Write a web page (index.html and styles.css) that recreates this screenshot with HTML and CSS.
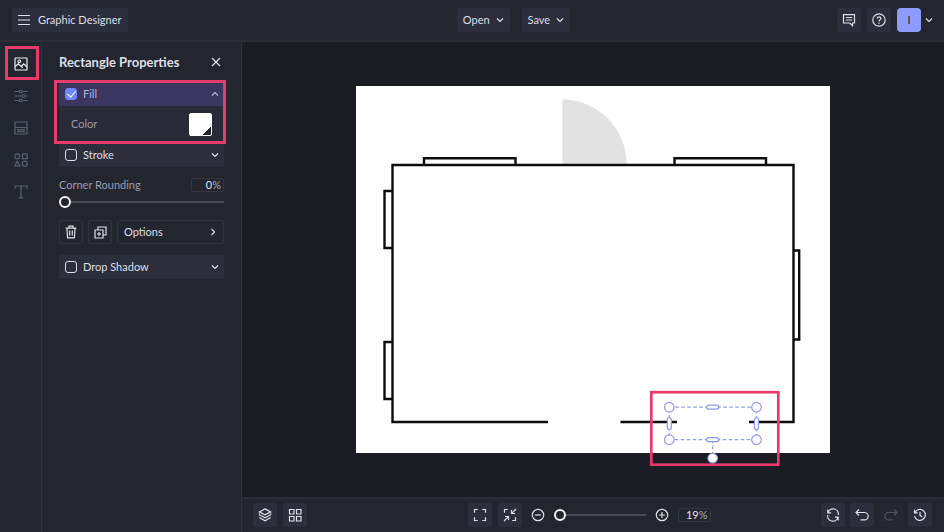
FILE: index.html
```html
<!DOCTYPE html>
<html lang="en">
<head>
<meta charset="utf-8">
<title>Graphic Designer</title>
<link rel="stylesheet" href="styles.css">
</head>
<body>
<div class="app">
  <header class="topbar">
    <button class="btn menu-btn" type="button">
      <svg class="icon" width="12" height="12" viewBox="0 0 12 12"><path d="M0 1.500h12M0 6h12M0 10.500h12"/></svg>
      Graphic Designer
    </button>
    <div class="file-actions">
      <button class="btn" type="button">Open <svg class="icon" width="8" height="8" viewBox="0 0 8 8"><path d="M1 2.500l3 3 3-3"/></svg></button>
      <button class="btn" type="button">Save <svg class="icon" width="8" height="8" viewBox="0 0 8 8"><path d="M1 2.500l3 3 3-3"/></svg></button>
    </div>
    <div class="account">
      <button class="btn square" type="button" aria-label="Feedback"><svg class="icon" width="14" height="14" viewBox="0 0 14 14"><path d="M1.500 1.700h11v8.300h-2v2.600L7.800 10H1.500zM3.800 4.500h6.400M3.800 7h6.400"/></svg></button>
      <button class="btn square" type="button" aria-label="Help"><svg class="icon" width="14" height="14" viewBox="0 0 14 14"><circle cx="7" cy="7" r="6.200"/><path d="M5.200 5.600C5.200 3.200 8.900 3.300 8.900 5.500 8.900 6.800 7 6.800 7 8.400M7 9.700v1.200"/></svg></button>
      <button class="btn square avatar" type="button">I</button>
      <button class="bare" type="button" aria-label="Account menu"><svg class="icon" width="8" height="8" viewBox="0 0 8 8"><path d="M1 2.500l3 3 3-3"/></svg></button>
    </div>
  </header>

  <nav class="rail" aria-label="Tools">
    <button class="tool active" type="button" aria-label="Image"><svg class="icon" width="14" height="14" viewBox="0 0 14 14"><rect x="1" y="1" width="12" height="12" rx=".6"/><circle cx="5.300" cy="4.300" r="1.300"/><path d="M1 9.700l3.200-3 3 2.700 2.500-2.600L13 10M7.200 9.400l1.600 1.400"/></svg></button>
    <button class="tool" type="button" aria-label="Adjust"><svg class="icon" width="14" height="14" viewBox="0 0 14 14"><path d="M.5 2.500h4.700M8.200 2.500h5.300M.5 7h7.700M11.200 7h2.300M.5 11.500h4.700M8.200 11.500h5.300"/><circle cx="6.700" cy="2.500" r="1.500"/><circle cx="9.700" cy="7" r="1.500"/><circle cx="6.700" cy="11.500" r="1.500"/></svg></button>
    <button class="tool" type="button" aria-label="Templates"><svg class="icon" width="14" height="14" viewBox="0 0 14 14"><path d="M1 1h12v12H1zM1 6.500h12M3 8.700h8M3 10.700h8"/></svg></button>
    <button class="tool" type="button" aria-label="Shapes"><svg class="icon" width="14" height="14" viewBox="0 0 14 14"><circle cx="3.300" cy="3.300" r="2.500"/><rect x="8.500" y="1" width="4.700" height="4.700"/><path d="M3.300 8.300L5.900 13H.7z"/><circle cx="10.800" cy="10.700" r="2.500"/></svg></button>
    <button class="tool" type="button" aria-label="Text"><svg class="icon" width="14" height="14" viewBox="0 0 14 14"><path d="M1 3.500V1h12v2.500M7 1v12M4.500 13h5"/></svg></button>
  </nav>

  <aside class="panel">
    <div class="panel-head">
      <h2>Rectangle Properties</h2>
      <button class="bare" type="button" aria-label="Close"><svg class="icon" width="10" height="10" viewBox="0 0 10 10"><path d="M1 1l8 8M9 1L1 9"/></svg></button>
    </div>
    <section class="fill-group">
      <div class="section-head open">
        <label><input type="checkbox" checked>Fill</label>
        <button class="bare" type="button" aria-label="Collapse fill"><svg class="icon" width="8" height="8" viewBox="0 0 8 8"><path d="M1 5.500l3-3 3 3"/></svg></button>
      </div>
      <div class="color-row">
        <span id="color-label">Color</span>
        <button class="swatch" type="button" aria-labelledby="color-label"></button>
      </div>
    </section>
    <div class="section-head">
      <label><input type="checkbox">Stroke</label>
      <button class="bare" type="button" aria-label="Expand stroke"><svg class="icon" width="8" height="8" viewBox="0 0 8 8"><path d="M1 2.500l3 3 3-3"/></svg></button>
    </div>
    <div class="rounding">
      <label for="rounding">Corner Rounding</label>
      <span class="percent"><input id="rounding" type="text" value="0">%</span>
    </div>
    <input class="slider" type="range" min="0" max="100" value="0" aria-label="Corner rounding slider">
    <div class="object-actions">
      <button class="outline" type="button" aria-label="Delete"><svg class="icon" width="12" height="14" viewBox="0 0 12 14"><path d="M.7 3.200h10.600M4 3V1.200h4V3M2 3.500l.6 9.300h6.800l.6-9.300M4.700 5.500v5M7.300 5.500v5"/></svg></button>
      <button class="outline" type="button" aria-label="Duplicate"><svg class="icon" width="13" height="13" viewBox="0 0 13 13"><path d="M4 3.500V1h8v8H9.500M1 4h8v8H1zM5 6v4M3 8h4"/></svg></button>
      <button class="outline options" type="button">Options <svg class="icon" width="8" height="8" viewBox="0 0 8 8"><path d="M2.500 1l3 3-3 3"/></svg></button>
    </div>
    <div class="section-head">
      <label><input type="checkbox">Drop Shadow</label>
      <button class="bare" type="button" aria-label="Expand drop shadow"><svg class="icon" width="8" height="8" viewBox="0 0 8 8"><path d="M1 2.500l3 3 3-3"/></svg></button>
    </div>
  </aside>

  <main class="workspace">
    <svg class="drawing" viewBox="242 42 702 455" role="img" aria-label="Floor plan">
      <rect x="356" y="86" width="474" height="367" fill="#fff"/>
      <path d="M562.500 164V99.500A64 64.500 0 0 1 626.500 164z" fill="#e2e2e2"/>
      <g fill="none" stroke="#0c0c0e" stroke-width="2.400">
        <path d="M548 422H392.500V165h401v257H749M620.500 422H677"/>
        <path d="M424 165v-6.700h91.500v6.700M674.500 165v-6.700H766v6.700"/>
        <path d="M392.500 191h-8v57h8M392.500 342h-8v57h8M793.500 250.500h5.700v89h-5.700"/>
      </g>
      <rect x="651.300" y="392.200" width="127" height="72.500" fill="none" stroke="#e83a6b" stroke-width="2.700"/>
      <g fill="#fff" stroke="#8c9af0" stroke-width="1.200">
        <path d="M669.300 407.200h87.200v32.500h-87.200zM712.700 439.700V458" fill="none" stroke-dasharray="3.500 2.500"/>
        <circle cx="669.300" cy="407.200" r="4.800"/><circle cx="756.500" cy="407.200" r="4.800"/>
        <circle cx="669.300" cy="439.700" r="4.800"/><circle cx="756.500" cy="439.700" r="4.800"/>
        <rect x="706.700" y="405.200" width="12" height="4" rx="2"/>
        <rect x="706.700" y="437.700" width="12" height="4" rx="2"/>
        <rect x="667.300" y="417.500" width="4" height="12" rx="2"/>
        <rect x="754.500" y="417.500" width="4" height="12" rx="2"/>
        <circle cx="712.700" cy="458.200" r="4.800"/>
      </g>
    </svg>
  </main>

  <footer class="bottombar">
    <div class="group">
      <button class="btn square" type="button" aria-label="Layers"><svg class="icon" width="14" height="14" viewBox="0 0 14 14"><path d="M7 .9l5.700 3L7 6.900l-5.700-3zM1.300 6.700L7 9.700l5.700-3M1.300 9.600l5.700 3.200 5.700-3.200M1.300 5.500v1.200M12.700 5.500v1.200"/></svg></button>
      <button class="btn square" type="button" aria-label="Grid"><svg class="icon" width="14" height="14" viewBox="0 0 14 14"><path d="M1.500 1.500H6V6H1.500zM8.500 1.500H13V6H8.500zM1.500 8.500H6V13H1.500zM8.500 8.500H13V13H8.500z"/></svg></button>
    </div>
    <div class="group zoom">
      <button class="btn square" type="button" aria-label="Fit to screen"><svg class="icon" width="14" height="14" viewBox="0 0 14 14"><path d="M1.500 4.800V1.500h3.300M9.200 1.500h3.300v3.300M12.500 9.200v3.300H9.200M4.800 12.500H1.500V9.200"/></svg></button>
      <button class="btn square" type="button" aria-label="Actual size"><svg class="icon" width="14" height="14" viewBox="0 0 14 14"><path d="M1.500 4.800V1.500h3.300M12.500 9.200v3.300H9.200M13 1L8.700 5.300M8.500 2v3.500H12M1 13l4.300-4.300M2 8.500h3.500V12"/></svg></button>
      <button class="bare zoom-btn" type="button" aria-label="Zoom out"><svg class="icon" width="14" height="14" viewBox="0 0 14 14"><circle cx="7" cy="7" r="5.700"/><path d="M4 7h6"/></svg></button>
      <input class="slider" type="range" min="0" max="100" value="1" aria-label="Zoom">
      <button class="bare zoom-btn" type="button" aria-label="Zoom in"><svg class="icon" width="14" height="14" viewBox="0 0 14 14"><circle cx="7" cy="7" r="5.700"/><path d="M4 7h6M7 4v6"/></svg></button>
      <span class="percent"><input type="text" value="19" aria-label="Zoom percent">%</span>
    </div>
    <div class="group end">
      <button class="btn square" type="button" aria-label="Reset"><svg class="icon" width="14" height="14" viewBox="0 0 14 14"><path d="M1.800 1.500v3.300h3.300M2 4.600A5.300 5.300 0 0 1 12.300 7M12.200 12.500V9.200H8.900M12 9.400A5.300 5.300 0 0 1 1.700 7"/></svg></button>
      <button class="btn square" type="button" aria-label="Undo"><svg class="icon" width="14" height="14" viewBox="0 0 14 14"><path d="M4 1.500L1 4.500l3 3M1 4.500h8.500a3.700 3.700 0 0 1 0 7.400H5.500"/></svg></button>
      <button class="btn square" type="button" aria-label="Redo" disabled><svg class="icon" width="14" height="14" viewBox="0 0 14 14"><path d="M10 1.500l3 3-3 3M13 4.500H4.500a3.700 3.700 0 0 0 0 7.400h4"/></svg></button>
      <button class="btn square" type="button" aria-label="History"><svg class="icon" width="14" height="14" viewBox="0 0 14 14"><path d="M1.500 1.700v3.200h3.200M1.800 4.700a5.500 5.500 0 1 1-.3 3.500M7 4v3.300l2.300 1.400"/></svg></button>
    </div>
  </footer>
</div>
</body>
</html>
```
FILE: styles.css
```css
* { box-sizing: border-box; }

body {
  margin: 0;
  background: #1c1c25;
  color: #dfdfe7;
  font: 11px/16px Lato, "Open Sans", sans-serif;
}

button, input { font: inherit; color: inherit; margin: 0; }
button { padding: 0; border: 0; background: none; }

.icon {
  display: block;
  flex: none;
  fill: none;
  stroke: currentColor;
  stroke-width: 1.2;
}

.app {
  display: grid;
  grid-template: 42px 1fr 36px / 42px 200px 1fr;
  min-height: 100vh;
}

.topbar {
  grid-column: 1 / -1;
  display: grid;
  grid-template-columns: 1fr auto 1fr;
  align-items: center;
  padding: 0 11px 0 12px;
  background: #23252f;
  border-bottom: 2px solid #2b2d39;
}

.btn {
  display: flex;
  align-items: center;
  justify-content: center;
  height: 24px;
  gap: 6px;
  padding: 0 6px;
  border-radius: 2px;
  background: #2c2e3b;
}

.square { width: 24px; padding: 0; }
.btn:disabled { background: #252731; color: #50525f; }
.bare { display: flex; align-items: center; justify-content: center; }

.menu-btn { justify-self: start; gap: 8px; }
.file-actions { display: flex; gap: 12px; margin-left: 82px; }
.account { display: flex; justify-content: flex-end; gap: 6px; }
.account .bare { margin-left: -2px; }
.avatar { border-radius: 4px; background: #8d9cff; color: #1d2030; }

.rail {
  display: flex;
  flex-direction: column;
  padding-top: 6px;
  background: #23252f;
  border-right: 1px solid #2d2f3b;
}

.tool {
  display: flex;
  align-items: center;
  justify-content: center;
  height: 32px;
  color: #5d6075;
}

.tool.active {
  position: relative;
  color: #eeeef3;
}

.tool.active::after {
  content: "";
  position: absolute;
  inset: -2px 2px 0 5px;
  border: 3px solid #e83a6b;
}

.panel {
  padding: 12px 17px;
  background: #23252f;
  border-right: 1px solid #2d2f3b;
}

.panel-head {
  display: flex;
  align-items: center;
  justify-content: space-between;
  padding-right: 3px;
  margin-bottom: 12px;
}

h2 { margin: 0; font-size: 13px; line-height: 16px; font-weight: 700; }

.fill-group { position: relative; background: #282a37; margin-bottom: 1px; }

.fill-group::after {
  content: "";
  position: absolute;
  inset: -2px -2px -2px -5px;
  border: 3px solid #e83a6b;
  pointer-events: none;
}

.section-head {
  display: flex;
  align-items: center;
  justify-content: space-between;
  height: 24px;
  padding: 0 5px 0 6px;
  background: #2c2e3b;
}

.section-head.open { background: #3a3661; color: #b5b3e6; }
.section-head label { display: flex; align-items: center; gap: 6px; }

input[type="checkbox"] {
  appearance: none;
  width: 12px;
  height: 12px;
  border: 1px solid #dddde2;
  border-radius: 3px;
}

input[type="checkbox"]:checked {
  display: grid;
  place-items: center;
  border-color: #6f86ff;
  background: #6f86ff;
}

input[type="checkbox"]:checked::after {
  content: "";
  width: 4px;
  height: 7px;
  border: solid #fff;
  border-width: 0 1px 1px 0;
  rotate: 40deg;
  translate: 0 -1px;
}

.color-row {
  display: flex;
  align-items: center;
  justify-content: space-between;
  height: 36px;
  padding: 0 12px;
  color: #9a9caf;
}

.swatch {
  width: 23px;
  height: 23px;
  border: 1px solid #fff;
  border-radius: 2px;
  background: linear-gradient(135deg, transparent 50%, #23252f 50%) right bottom / 9px 9px no-repeat #fff;
}

.rounding {
  display: flex;
  align-items: center;
  justify-content: space-between;
  margin-top: 10px;
  color: #9a9caf;
}

.percent {
  display: flex;
  align-items: center;
  width: 33px;
  height: 14px;
  padding-right: 2px;
  border: 1px solid #343642;
  border-radius: 2px;
  color: #a9abba;
}

.percent input {
  flex: 1;
  min-width: 0;
  padding: 0;
  border: 0;
  outline: 0;
  background: none;
  color: #e4e4ea;
  text-align: right;
}

.slider {
  appearance: none;
  display: block;
  width: 100%;
  height: 12px;
  background: linear-gradient(#474957, #474957) center / 100% 2px no-repeat;
}

.panel .slider { margin-top: 3px; }

.slider::-webkit-slider-thumb {
  appearance: none;
  width: 12px;
  height: 12px;
  border: 2px solid #f2f2f5;
  border-radius: 50%;
  background: #23252f;
}

.object-actions { display: flex; gap: 5px; margin: 12px 0 11px; }

.outline {
  display: flex;
  align-items: center;
  justify-content: center;
  width: 24px;
  height: 24px;
  border: 1px solid #30323e;
  border-radius: 2px;
}

.options { flex: 1; justify-content: space-between; padding: 0 6px; }

.workspace { overflow: hidden; }
.drawing { display: block; width: 100%; }

.rail, .panel { grid-row: 2 / 4; }

.bottombar {
  grid-column: 3;
  display: grid;
  grid-template-columns: 1fr auto 1fr;
  align-items: center;
  padding: 0 12px 0 11px;
  background: #23252f;
  border-top: 2px solid #2b2d39;
}

.bottombar .btn, .bottombar .zoom-btn, .bottombar .slider, .bottombar .percent { margin-bottom: 2px; }

.group { display: flex; align-items: center; gap: 6px; }
.end { justify-content: flex-end; gap: 5px; }
.zoom { margin-right: 7px; }
.zoom .slider { width: 92px; }
.zoom-btn { width: 14px; margin: 0 3px; }
```
